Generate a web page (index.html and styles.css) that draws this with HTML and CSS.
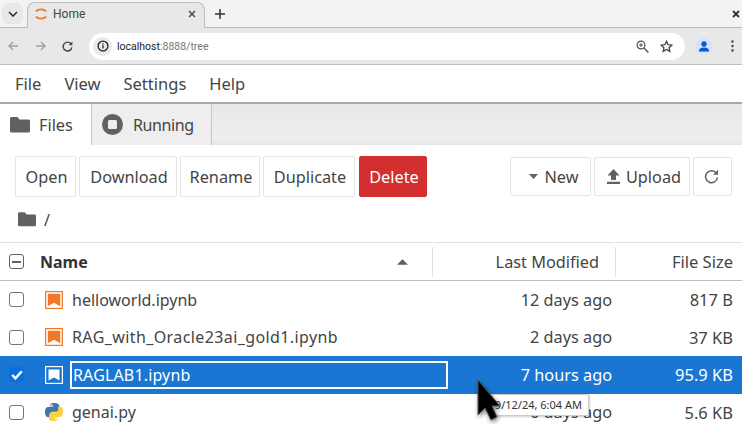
FILE: index.html
```html
<!DOCTYPE html>
<html lang="en">
<head>
    <meta charset="UTF-8">
    <title>Home</title>
    <link rel="stylesheet" href="styles.css">
</head>
<body>
    <div class="tabstrip">
        <div class="tab-search">
            <svg width="10" height="6" viewBox="0 0 10 6"><path d="M1 1l4 4 4-4" fill="none" stroke="#333" stroke-width="1.6"/></svg>
        </div>
        <div class="tab">
            <svg class="tab-logo" width="14" height="14" viewBox="0 0 14 14"><path d="M2 4.6C3.4 1.6 10.6 1.6 12 4.6M2 9.4C3.4 12.4 10.6 12.4 12 9.4" fill="none" stroke="#f37726" stroke-width="1.7"/></svg>
            <span class="tab-title">Home</span>
            <svg class="tab-x" width="8" height="8" viewBox="0 0 8 8"><path d="M1 1l6 6M7 1l-6 6" stroke="#444" stroke-width="1.4"/></svg>
        </div>
        <svg class="tab-plus" width="10" height="10" viewBox="0 0 10 10"><path d="M5 0v10M0 5h10" stroke="#333" stroke-width="1.5"/></svg>
        <svg class="win-close" width="8" height="8" viewBox="0 0 8 8"><path d="M1 1l6 6M7 1l-6 6" stroke="#333" stroke-width="1.8"/></svg>
    </div>

    <div class="urlbar">
        <svg width="11" height="10" viewBox="0 0 11 10"><path d="M10 5H1.5M5 1L1 5l4 4" fill="none" stroke="#a0a0a0" stroke-width="1.4"/></svg>
        <svg class="nav-forward" width="11" height="10" viewBox="0 0 11 10"><path d="M1 5h8.5M6 1l4 4-4 4" fill="none" stroke="#a0a0a0" stroke-width="1.4"/></svg>
        <svg class="nav-reload" width="11" height="11" viewBox="0 0 11 11"><path d="M9.3 3.2A4.4 4.4 0 1 0 9.9 6.4" fill="none" stroke="#444" stroke-width="1.4"/><path d="M10.4.6v3.6H6.8z" fill="#444"/></svg>
        <div class="omnibox">
            <span class="site-info">
                <svg width="12" height="12" viewBox="0 0 12 12"><circle cx="6" cy="6" r="4.9" fill="none" stroke="#222" stroke-width="1.3"/><path d="M6 5.2v3.4M6 3.2v1.2" stroke="#222" stroke-width="1.3"/></svg>
            </span>
            <span class="url"><span class="url-host">localhost</span>:8888/tree</span>
            <svg class="omni-zoom" width="13" height="13" viewBox="0 0 13 13"><circle cx="5" cy="5" r="3.9" fill="none" stroke="#555" stroke-width="1.2"/><path d="M8 8l4.4 4.4" stroke="#555" stroke-width="1.4"/><path d="M5 3v4M3 5h4" stroke="#555"/></svg>
            <svg class="omni-star" width="13" height="13" viewBox="0 0 24 24"><path d="M12 2.5l2.9 6.3 6.9.8-5.1 4.7 1.4 6.8-6.1-3.5-6.1 3.5 1.4-6.8-5.1-4.7 6.9-.8z" fill="none" stroke="#444" stroke-width="2.4"/></svg>
        </div>
        <span class="profile">
            <svg width="12" height="11" viewBox="0 0 12 11"><circle cx="6" cy="3" r="2.7" fill="#0b57d0"/><path d="M1 10.500c0-3 2-4 5-4s5 1 5 4z" fill="#0b57d0"/></svg>
        </span>
        <svg class="kebab" width="3" height="12" viewBox="0 0 3 12"><circle cx="1.500" cy="1.500" r="1.200" fill="#444"/><circle cx="1.500" cy="6" r="1.200" fill="#444"/><circle cx="1.500" cy="10.500" r="1.200" fill="#444"/></svg>
    </div>

    <div class="menubar">
        <span>File</span>
        <span>View</span>
        <span>Settings</span>
        <span>Help</span>
    </div>

    <div class="main-tabs">
        <div class="main-tab active">
            <svg width="20" height="16" viewBox="0 0 20 16"><path d="M1.500 0h6l2 2.500h9a1.500 1.500 0 0 1 1.500 1.500v10a1.500 1.500 0 0 1-1.500 1.500h-17A1.500 1.500 0 0 1 0 14V1.500A1.500 1.500 0 0 1 1.500 0z" fill="#616161"/></svg>
            Files
        </div>
        <div class="main-tab running">
            <svg width="21" height="21" viewBox="0 0 21 21"><circle cx="10.500" cy="10.500" r="10.500" fill="#616161"/><rect x="6" y="6" width="9" height="9" rx="1.500" fill="#eee"/></svg>
            Running
        </div>
    </div>

    <div class="toolbar">
        <div class="btn-group">
            <button class="btn btn-open">Open</button>
            <button class="btn btn-download">Download</button>
            <button class="btn btn-rename">Rename</button>
            <button class="btn btn-duplicate">Duplicate</button>
            <button class="btn btn-delete">Delete</button>
        </div>
        <div class="btn-group right">
            <button class="btn btn-new"><svg width="9" height="5" viewBox="0 0 9 5"><path d="M0 0h9L4.500 5z" fill="#616161"/></svg>New</button>
            <button class="btn btn-upload"><svg width="13" height="15" viewBox="0 0 13 15"><path d="M6.500 0l6 6.500H9v4.500H4V6.500H.5zM0 12.800h13V15H0z" fill="#616161"/></svg>Upload</button>
            <button class="btn btn-refresh"><svg width="15" height="15" viewBox="0 0 15 15"><path d="M12.400 4.200A6 6 0 1 0 13.500 8.500" fill="none" stroke="#616161" stroke-width="1.500"/><path d="M14 .8v5h-5z" fill="#616161"/></svg></button>
        </div>
    </div>

    <div class="breadcrumb">
        <svg width="18" height="15" viewBox="0 0 20 16"><path d="M1.500 0h6l2 2.500h9a1.500 1.500 0 0 1 1.500 1.500v10a1.500 1.500 0 0 1-1.500 1.500h-17A1.500 1.500 0 0 1 0 14V1.500A1.500 1.500 0 0 1 1.500 0z" fill="#616161"/></svg>
        <span>/</span>
    </div>

    <div class="listing">
        <div class="list-head">
            <span class="check mixed"></span>
            <span class="col-name head-name">Name</span>
            <svg class="sort" width="11" height="6" viewBox="0 0 12 6"><path d="M6 0l6 6H0z" fill="#616161"/></svg>
            <span class="col-modified head-cell">Last Modified</span>
            <span class="col-size head-cell">File Size</span>
        </div>

        <div class="row">
            <span class="check"></span>
            <svg class="file-icon" width="18" height="18" viewBox="0 0 18 18"><rect x=".6" y=".6" width="16.800" height="16.800" fill="#fff" stroke="#f37726" stroke-width="1.200"/><path d="M2.800 2.800h12.400v12.400L9 11.800l-6.200 3.400z" fill="#f37726"/></svg>
            <span class="col-name">helloworld.ipynb</span>
            <span class="col-modified">12 days ago</span>
            <span class="col-size">817 B</span>
        </div>
        <div class="row">
            <span class="check"></span>
            <svg class="file-icon" width="18" height="18" viewBox="0 0 18 18"><rect x=".6" y=".6" width="16.800" height="16.800" fill="#fff" stroke="#f37726" stroke-width="1.200"/><path d="M2.800 2.800h12.400v12.400L9 11.800l-6.200 3.400z" fill="#f37726"/></svg>
            <span class="col-name long-name">RAG_with_Oracle23ai_gold1.ipynb</span>
            <span class="col-modified">2 days ago</span>
            <span class="col-size">37 KB</span>
        </div>
        <div class="row selected">
            <span class="check checked">
                <svg width="12" height="10" viewBox="0 0 12 10"><path d="M1.200 5l3.200 3.400L10.800 1.200" fill="none" stroke="#fff" stroke-width="2.400"/></svg>
            </span>
            <svg class="file-icon" width="18" height="18" viewBox="0 0 18 18"><rect x=".6" y=".6" width="16.800" height="16.800" fill="none" stroke="#fff" stroke-width="1.200"/><path d="M3.500 3.500h11v11L9 11.500l-5.500 3z" fill="#fff"/></svg>
            <span class="col-name rename-input">RAGLAB1.ipynb</span>
            <span class="col-modified">7 hours ago</span>
            <span class="col-size">95.9 KB</span>
        </div>
        <div class="row">
            <span class="check"></span>
            <svg class="file-icon" width="18" height="18" viewBox="0 0 18 18">
                <path d="M8.900 0C5.200 0 5.400 1.600 5.400 1.600v1.800h3.600V4H3.500S0 3.600 0 9s3 5.200 3 5.200h1.900v-2.500s-.1-3 3-3h3.500s2.900 0 2.900-2.800V2.900S14.700 0 8.900 0zM6.900 1.200a.9.9 0 1 1 0 1.800.9.9 0 0 1 0-1.800z" fill="#3c78aa"/>
                <path d="M9.100 18c3.700 0 3.500-1.600 3.500-1.600v-1.800H9V14h5.500s3.500.4 3.500-5-3-5.200-3-5.200h-1.900v2.500s.1 3-3 3H7.100s-2.900 0-2.900 2.800v3.800S3.300 18 9.100 18zm2-1.200a.9.9 0 1 1 0-1.800.9.9 0 0 1 0 1.800z" fill="#fdd040"/>
            </svg>
            <span class="col-name">genai.py</span>
            <span class="col-modified">6 days ago</span>
            <span class="col-size">5.6 KB</span>
        </div>
    </div>

    <div class="tooltip">9/12/24, 6:04 AM</div>
    <svg class="cursor" width="30" height="46" viewBox="0 0 30 46"><path d="M2 2v35l7-7 6 12 6-3-5-11h8z" fill="#000" stroke="#555" stroke-width="1"/></svg>
</body>
</html>
```

FILE: styles.css
```css
html, body {
    margin: 0;
    height: 424px;
    overflow: hidden;
}
body {
    position: relative;
    font-family: "Noto Sans", "Open Sans", sans-serif;
    color: #333;
    background-color: white;
}
svg {
    flex: none;
    display: block;
}

/* browser chrome */
.tabstrip {
    display: flex;
    align-items: center;
    height: 27px;
    background-color: #f3f3f3;
    border-bottom: 1px solid #bdbdbd;
}
.tab-search {
    display: flex;
    align-items: center;
    justify-content: center;
    width: 21px;
    height: 21px;
    margin-left: 2px;
    border-radius: 7px;
    background-color: #e8e8e8;
}
.tab {
    display: flex;
    align-items: center;
    align-self: flex-end;
    box-sizing: border-box;
    width: 178px;
    height: 26px;
    margin-bottom: -1px;
    margin-left: 4px;
    padding: 0 8px 3px 6px;
    background-color: #e8e8e8;
    border: 1px solid #bdbdbd;
    border-bottom: none;
    border-radius: 8px 8px 0 0;
}
.tab-title {
    margin-left: 5px;
    font-family: "Roboto", sans-serif;
    font-size: 12px;
    color: #444;
}
.tab-x {
    margin-left: auto;
}
.tab-plus {
    margin-left: 10px;
}
.win-close {
    margin-left: auto;
    margin-right: 2px;
}
.urlbar {
    display: flex;
    align-items: center;
    height: 36px;
    padding-left: 8px;
    background-color: #e8e8e8;
    border-bottom: 1px solid #bdbdbd;
}
.nav-forward {
    margin-left: 16px;
}
.nav-reload {
    margin-left: 16px;
}
.omnibox {
    display: flex;
    align-items: center;
    box-sizing: border-box;
    width: 596px;
    height: 27px;
    margin-left: 16px;
    padding: 0 12px 0 4px;
    background-color: white;
    border-radius: 14px;
}
.site-info {
    display: flex;
    align-items: center;
    justify-content: center;
    width: 19px;
    height: 19px;
    border-radius: 50%;
    background-color: #e8e8e8;
}
.url {
    margin-left: 5px;
    font-family: "Roboto", sans-serif;
    font-size: 10.5px;
    color: #777;
}
.url-host {
    color: #222;
}
.omni-zoom {
    margin-left: auto;
}
.omni-star {
    margin-left: 11px;
}
.profile {
    display: flex;
    align-items: center;
    justify-content: center;
    width: 16px;
    height: 16px;
    margin-left: 11px;
    border-radius: 50%;
    background-color: #d3e3fd;
}
.kebab {
    margin-left: 19px;
}

/* jupyter */
.menubar {
    display: flex;
    align-items: center;
    gap: 23px;
    height: 37px;
    padding-left: 15px;
    font-size: 16.5px;
    color: #444;
    border-bottom: 2px solid #a8a8a8;
}
.main-tabs {
    display: flex;
    height: 41px;
    background-color: #ececec;
    background-image: linear-gradient(#e8e8e8, #eeeeee 85%, #e6e6e6);
}
.main-tab {
    display: flex;
    align-items: center;
    gap: 9px;
    box-sizing: border-box;
    width: 120px;
    padding-left: 10px;
    font-size: 16.3px;
    color: #444;
    background-color: #eeeeee;
    border-right: 1px solid #c8c8c8;
}
.main-tab.running {
    gap: 10px;
    font-size: 16px;
    letter-spacing: -0.4px;
}
.main-tab.active {
    width: 92px;
    background-color: white;
}
.toolbar {
    display: flex;
    justify-content: space-between;
    padding: 11px 10px 0 15px;
}
.btn-group {
    display: flex;
    gap: 3px;
}
.btn-group.right {
    height: 39px;
    margin-top: 1px;
}
.btn {
    display: flex;
    align-items: center;
    justify-content: center;
    gap: 6px;
    height: 41px;
    padding: 0 0 0 2px;
    font-family: inherit;
    font-size: 16.3px;
    color: #444;
    background-color: white;
    border: 1px solid #e4e4e4;
    border-radius: 2px;
}
.btn-group.right .btn {
    height: 39px;
    font-size: 16.3px;
}
.btn-open { width: 61px; }
.btn-download { width: 98px; }
.btn-rename { width: 80px; }
.btn-duplicate { width: 92px; }
.btn-delete {
    width: 68px;
    margin-left: 1px;
    color: #fff;
    background-color: #d32f2f;
    border-color: #d32f2f;
}
.btn-new { width: 81px; padding-left: 7px; }
.btn-upload { width: 96px; padding-left: 4px; }
.btn-refresh { width: 39px; padding: 0 2px 0 0; }
.breadcrumb {
    display: flex;
    align-items: center;
    gap: 8px;
    height: 45px;
    padding-left: 18px;
    font-size: 16px;
    color: #444;
}

/* file list */
.listing {
    border-top: 1px solid #e0e0e0;
}
.list-head {
    display: flex;
    align-items: center;
    height: 37px;
    font-size: 16px;
    border-bottom: 1px solid #bdbdbd;
}
.row {
    display: flex;
    align-items: center;
    height: 37.5px;
    font-size: 16px;
    color: #444;
}
.row.selected {
    color: white;
    background-color: #1976d2;
}
.check {
    display: flex;
    align-items: center;
    justify-content: center;
    flex: none;
    box-sizing: border-box;
    width: 15px;
    height: 15px;
    margin-left: 9px;
    border: 1.5px solid #757575;
    border-radius: 3px;
}
.check.mixed {
    position: relative;
    border-color: #616161;
}
.check.mixed::after {
    content: "";
    width: 9px;
    height: 2px;
    background-color: #616161;
}
.check.checked {
    background-color: #0b6fe0;
    border-color: #0b6fe0;
}
.col-name {
    flex: 1;
    margin-left: 12px;
    white-space: nowrap;
}
.head-name {
    margin-left: 16px;
    font-weight: 700;
    color: #333;
}
.file-icon {
    margin-left: 21px;
}
.row .col-name {
    margin-left: 9px;
}
.row .long-name {
    letter-spacing: 0.4px;
}
.sort {
    margin-right: 24px;
}
.col-modified {
    box-sizing: border-box;
    width: 183px;
    padding-right: 3px;
    font-size: 16.3px;
    text-align: right;
    white-space: nowrap;
}
.col-size {
    box-sizing: border-box;
    width: 127px;
    padding-right: 9px;
    font-size: 16.5px;
    text-align: right;
    white-space: nowrap;
}
.head-cell {
    height: 30px;
    line-height: 30px;
    border-left: 1px solid #e0e0e0;
    color: #444;
}
.list-head .col-modified {
    width: 183px;
    padding-right: 16px;
}
.list-head .col-size {
    width: 127px;
}
.row .rename-input {
    flex: none;
    box-sizing: border-box;
    width: 378px;
    height: 28px;
    line-height: 24px;
    margin-left: 7px;
    padding-left: 1px;
    letter-spacing: 0.15px;
    border: 2px solid white;
}
.selected .col-modified {
    flex: 1;
    width: auto;
}

/* overlays */
.tooltip {
    position: absolute;
    left: 492px;
    top: 394px;
    box-sizing: border-box;
    width: 97px;
    height: 22px;
    line-height: 20px;
    padding-right: 6px;
    font-size: 11px;
    color: #333;
    text-align: right;
    white-space: nowrap;
    overflow: hidden;
    background-color: white;
    border: 1px solid #ccc;
    box-shadow: 1px 1px 2px rgba(0, 0, 0, 0.2);
}
.cursor {
    position: absolute;
    left: 476px;
    top: 378px;
    filter: drop-shadow(1px 2px 2px rgba(0, 0, 0, 0.5));
}
```
